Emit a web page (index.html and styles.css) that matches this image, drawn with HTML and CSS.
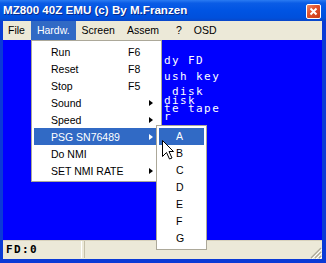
FILE: index.html
```html
<!DOCTYPE html>
<html lang="en">
<head>
    <meta charset="UTF-8">
    <title>MZ800 40Z EMU</title>
    <link rel="stylesheet" href="styles.css">
</head>
<body>
    <div class="window">
        <div class="titlebar">
            <span class="title">MZ800 40Z EMU (c) By M.Franzen</span>
            <span class="close-btn">
                <svg width="13" height="13" viewBox="0 0 13 13">
                    <path d="M3.5 3.5 L9.5 9.5 M9.5 3.5 L3.5 9.5" stroke="#fff" stroke-width="2"/>
                </svg>
            </span>
        </div>

        <div class="frame">
            <div class="menubar">
                <span class="menu-item">File</span>
                <span class="menu-item active">Hardw.</span>
                <span class="menu-item">Screen</span>
                <span class="menu-item">Assem</span>
                <span class="menu-item help">?</span>
                <span class="menu-item">OSD</span>
            </div>

            <!-- emulator screen -->
            <div class="screen">
                <div class="line">dy FD</div>
                <div class="line gap-a">ush key</div>
                <div class="line gap-b"> disk</div>
                <div class="line gap-c">disk</div>
                <div class="line">te tape</div>
                <div class="line">r</div>
            </div>

            <div class="statusbar">
                <div class="panel panel-fd">FD:0</div>
                <div class="panel panel-rest"></div>
                <svg class="grip" width="12" height="12" viewBox="0 0 12 12">
                    <path d="M11 1 L1 11 M11 5 L5 11 M11 9 L9 11" stroke="#aca899" stroke-width="1.2"/>
                    <path d="M12 2 L2 12 M12 6 L6 12 M12 10 L10 12" stroke="#fff" stroke-width="1"/>
                </svg>
            </div>
        </div>

        <!-- Hardw. menu -->
        <div class="dropdown">
            <div class="item"><span class="label">Run</span><span class="key">F6</span></div>
            <div class="item"><span class="label">Reset</span><span class="key">F8</span></div>
            <div class="item"><span class="label">Stop</span><span class="key">F5</span></div>
            <div class="item"><span class="label">Sound</span><span class="key"></span><span class="arrow"></span></div>
            <div class="item"><span class="label">Speed</span><span class="key"></span><span class="arrow"></span></div>
            <div class="item selected"><span class="label">PSG SN76489</span><span class="key"></span><span class="arrow"></span></div>
            <div class="item"><span class="label">Do NMI</span><span class="key"></span></div>
            <div class="item"><span class="label">SET NMI RATE</span><span class="key"></span><span class="arrow"></span></div>
        </div>

        <!-- PSG submenu -->
        <div class="submenu">
            <div class="sub-item selected">A</div>
            <div class="sub-item">B</div>
            <div class="sub-item">C</div>
            <div class="sub-item">D</div>
            <div class="sub-item">E</div>
            <div class="sub-item">F</div>
            <div class="sub-item">G</div>
        </div>

        <svg class="cursor" width="13" height="20" viewBox="0 0 13 20">
            <path d="M0.5 0.5 L0.5 16.5 L4.5 12.5 L7.5 19 L10 18 L7 11.5 L11.5 11.5 Z" fill="#fff" stroke="#000" stroke-width="1"/>
        </svg>
    </div>
</body>
</html>
```

FILE: styles.css
```css
body {
    margin: 0;
    background: #fff;
}

.window {
    position: relative;
    width: 326px;
    height: 263px;
    display: flex;
    flex-direction: column;
    background-color: #0a3ad6;
    font-family: "Liberation Sans", Arial, sans-serif;
    font-size: 10.5px;
}

/* Title bar */
.titlebar {
    height: 21px;
    display: flex;
    align-items: flex-start;
    justify-content: space-between;
    background: linear-gradient(#2a7bf2 0%, #0a5ce6 15%, #0054e3 50%, #0050dc 85%, #0a46c8 100%);
}

.title {
    color: #fff;
    font-weight: bold;
    font-size: 11.6px;
    padding: 3px 0 0 3px;
    line-height: 14px;
    text-shadow: 1px 1px 0 #0a2a8a;
}

.close-btn {
    width: 13px;
    height: 13px;
    margin: 4px 5px 0 0;
    border: 1px solid #fff;
    border-radius: 2px;
    background: linear-gradient(135deg, #f08a6a 0%, #e2532d 40%, #c73a16 100%);
    display: flex;
}

/* Window body */
.frame {
    flex: 1;
    display: flex;
    flex-direction: column;
    padding: 0 4px 4px 3px;
}

.menubar {
    height: 19px;
    display: flex;
    align-items: center;
    background-color: #ece9d8;
}

.menu-item {
    height: 19px;
    line-height: 19px;
    padding: 0 6px;
    color: #000;
}

.menu-item:first-child {
    padding-left: 5px;
}

.menu-item.active {
    background-color: #316ac5;
    color: #fff;
    padding: 0 6px;
}

.menu-item.help {
    margin-left: 5px;
}

/* Emulator screen */
.screen {
    flex: 1;
    background-color: #0000ff;
    padding: 17px 0 0 161px;
    color: #fff;
    font-family: "DejaVu Sans Mono", monospace;
    font-size: 11px;
    letter-spacing: 1.4px;
}

.line {
    height: 8px;
    line-height: 8px;
    white-space: pre;
}

.gap-a {
    margin-top: 8px;
}

.gap-b {
    margin-top: 7px;
}

.gap-c {
    margin-top: 1px;
}

/* Status bar */
.statusbar {
    height: 18px;
    display: flex;
    background-color: #ece9d8;
    border-top: 1px solid #d8d2bd;
    position: relative;
}

.panel {
    height: 17px;
    line-height: 17px;
}

.panel-fd {
    width: 79px;
    padding-left: 3px;
    border-right: 1px solid #fff;
    box-sizing: border-box;
    font-family: "DejaVu Sans Mono", monospace;
    font-weight: bold;
    font-size: 11px;
    letter-spacing: 1.4px;
}

.panel-rest {
    flex: 1;
    margin-left: 2px;
    border-left: 1px solid #c5c0a9;
}

.grip {
    position: absolute;
    right: 0;
    bottom: 0;
}

/* Dropdown menu */
.dropdown {
    position: absolute;
    left: 31px;
    top: 40px;
    width: 131px;
    box-sizing: border-box;
    padding: 2px;
    background-color: #fff;
    border: 1px solid #aca899;
}

.item {
    height: 17px;
    display: flex;
    align-items: center;
    padding-left: 17px;
    color: #000;
    white-space: nowrap;
}

.item.selected {
    background-color: #316ac5;
    color: #fff;
}

.label {
    flex: 0 0 77px;
}

.key {
    flex: 0 0 21px;
}

.arrow {
    width: 0;
    height: 0;
    border-top: 3.5px solid transparent;
    border-bottom: 3.5px solid transparent;
    border-left: 4px solid #000;
}

.item.selected .arrow {
    border-left-color: #fff;
}

/* PSG submenu */
.submenu {
    position: absolute;
    left: 156px;
    top: 125px;
    width: 51px;
    box-sizing: border-box;
    padding: 2px;
    background-color: #fff;
    border: 1px solid #aca899;
}

.sub-item {
    height: 17px;
    line-height: 17px;
    padding-left: 17px;
    color: #000;
}

.sub-item.selected {
    background-color: #316ac5;
    color: #fff;
}

/* mouse pointer over the submenu */
.cursor {
    position: absolute;
    left: 162px;
    top: 140px;
}
```
